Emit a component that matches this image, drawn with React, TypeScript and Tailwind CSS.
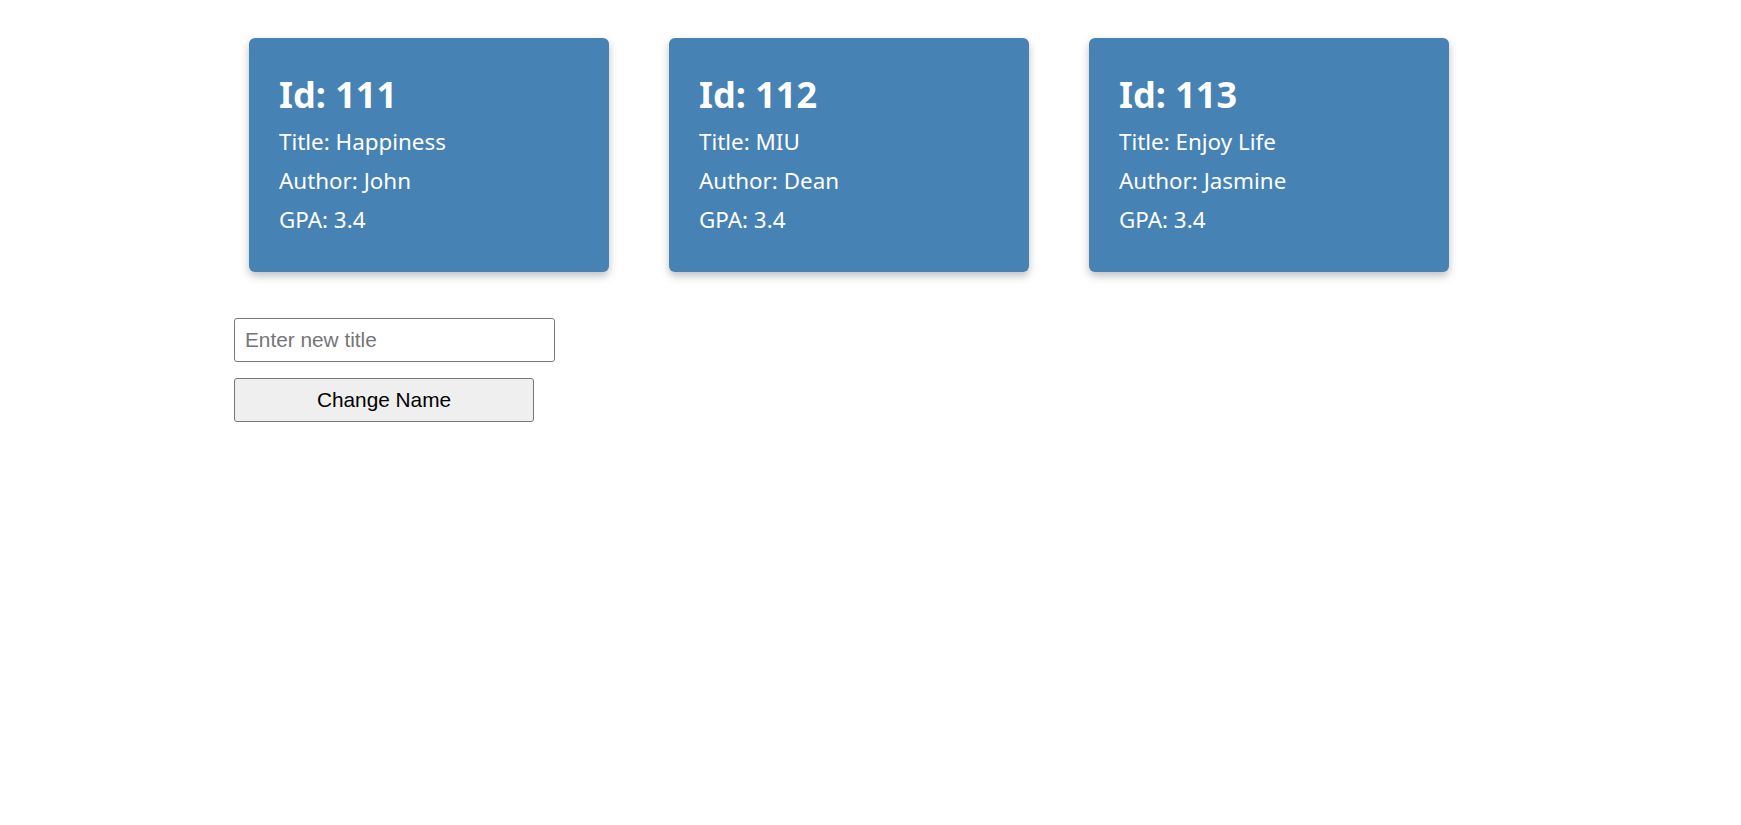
import React, { useState } from "react";

type Book = {
  id: number;
  title: string;
  author: string;
  gpa: number;
};

const books: Book[] = [
  { id: 111, title: "Happiness", author: "John", gpa: 3.4 },
  { id: 112, title: "MIU", author: "Dean", gpa: 3.4 },
  { id: 113, title: "Enjoy Life", author: "Jasmine", gpa: 3.4 },
];

const BookCard = ({ book }: { book: Book }) => {
  return (
    <div className="w-[360px] bg-[#4682b4] text-white rounded-md pl-[30px] pt-[35px] pb-[33px] shadow-[0_4px_8px_rgba(0,0,0,0.25)] font-['Noto_Sans',sans-serif]">
      <h2 className="text-[36px] leading-[44px] font-bold mb-[5px]">Id: {book.id}</h2>
      <p className="text-[22.4px] leading-[39px]">Title: {book.title}</p>
      <p className="text-[22.4px] leading-[39px]">Author: {book.author}</p>
      <p className="text-[22.4px] leading-[39px]">GPA: {book.gpa}</p>
    </div>
  );
};

export default function App() {
  const [title, setTitle] = useState("");

  return (
    <div className="min-h-screen bg-white pl-[234px] pt-[38px]">
      <div className="flex gap-[60px] pl-[15px]">
        {books.map((b) => (
          <BookCard key={b.id} book={b} />
        ))}
      </div>

      <div className="mt-[46px] flex flex-col items-start gap-[16px] font-['Liberation_Sans',Arial,sans-serif]">
        <input
          type="text"
          value={title}
          onChange={(e) => setTitle(e.target.value)}
          placeholder="Enter new title"
          className="w-[321px] h-[44px] border border-[#767676] rounded-[3px] px-[10px] text-[20.8px] text-black placeholder:text-[#757575] outline-none"
        />
        <button className="w-[300px] h-[44px] bg-[#efefef] border border-[#767676] rounded-[3px] text-[20.8px] text-black">
          Change Name
        </button>
      </div>
    </div>
  );
}
